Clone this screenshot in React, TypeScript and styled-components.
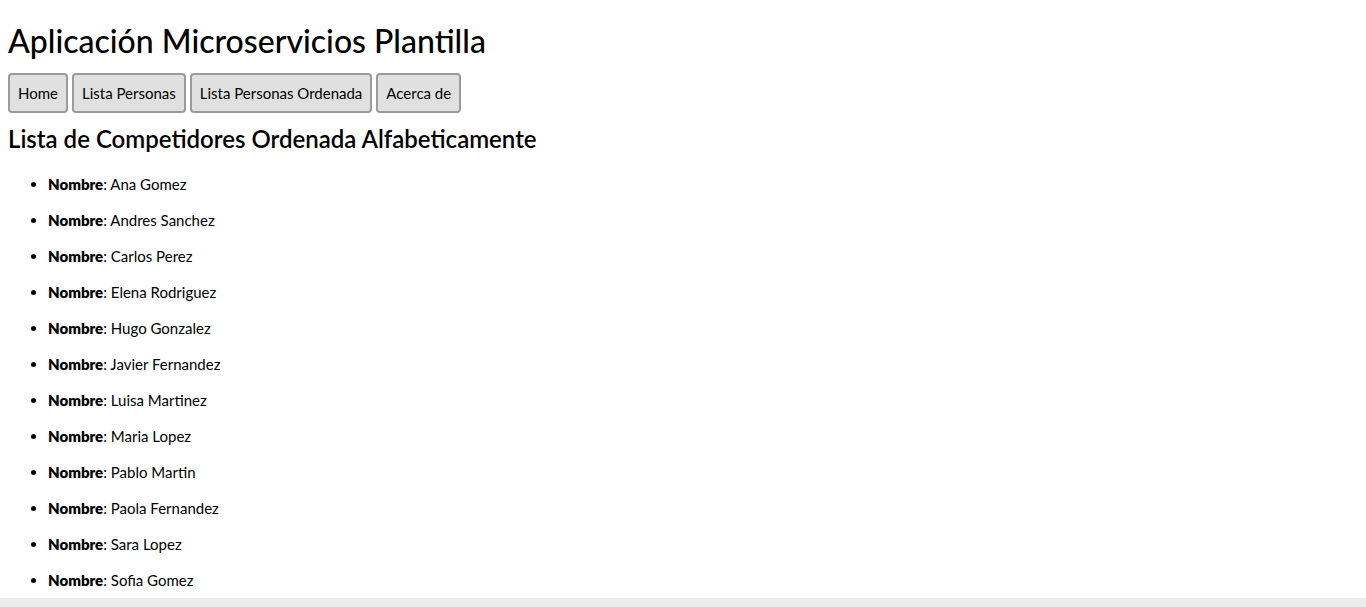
import React from 'react';
import styled, { createGlobalStyle } from 'styled-components';

const GlobalStyle = createGlobalStyle`
  body {
    margin: 0;
    background: #ffffff;
    color: #000000;
    font-family: Lato, "Liberation Sans", sans-serif;
  }
`;

const Page = styled.div`
  display: flex;
  flex-direction: column;
`;

const Main = styled.main`
  padding: 0 8px;
`;

const Title = styled.h1`
  margin: 21px 0 0;
  font-size: 32px;
  line-height: 40px;
  font-weight: 500;
`;

const Nav = styled.nav`
  display: flex;
  gap: 4px;
  margin-top: 12px;
`;

const NavButton = styled.button`
  height: 40px;
  padding: 0 8px;
  border: 2px solid #9a9a9a;
  border-radius: 4px;
  background: #e0e0e0;
  color: #000000;
  font-family: inherit;
  font-size: 15px;
`;

const Subtitle = styled.h2`
  margin: 11px 0 0;
  font-size: 24px;
  line-height: 30px;
  font-weight: 600;
`;

const List = styled.ul`
  margin: 20px 0 0;
  padding-left: 40px;
`;

const Item = styled.li`
  font-size: 15px;
  line-height: 20px;
  margin-bottom: 16px;

  &:last-child {
    margin-bottom: 8px;
  }
`;

const Label = styled.b`
  font-weight: 800;
`;

const Footer = styled.footer`
  height: 40px;
  background: #ececec;
`;

const tabs = ['Home', 'Lista Personas', 'Lista Personas Ordenada', 'Acerca de'];

const names = [
  'Ana Gomez',
  'Andres Sanchez',
  'Carlos Perez',
  'Elena Rodriguez',
  'Hugo Gonzalez',
  'Javier Fernandez',
  'Luisa Martinez',
  'Maria Lopez',
  'Pablo Martin',
  'Paola Fernandez',
  'Sara Lopez',
  'Sofia Gomez',
];

export default function App() {
  return (
    <Page>
      <GlobalStyle />
      <Main>
        <Title>Aplicación Microservicios Plantilla</Title>
        <Nav>
          {tabs.map((tab) => (
            <NavButton key={tab}>{tab}</NavButton>
          ))}
        </Nav>
        <Subtitle>Lista de Competidores Ordenada Alfabeticamente</Subtitle>
        <List>
          {names.map((name) => (
            <Item key={name}>
              <Label>Nombre</Label>: {name}
            </Item>
          ))}
        </List>
      </Main>
      <Footer />
    </Page>
  );
}
